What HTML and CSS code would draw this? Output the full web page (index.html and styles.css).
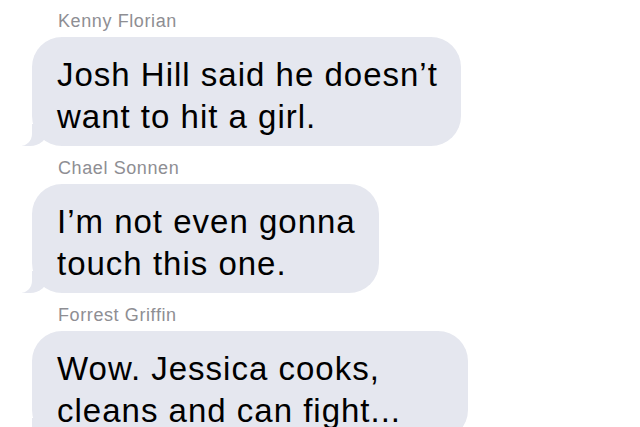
FILE: index.html
```html
<!DOCTYPE html>
<html lang="en">
<head>
  <meta charset="UTF-8" />
  <meta name="viewport" content="width=device-width, initial-scale=1" />
  <title>Group chat</title>
  <link rel="stylesheet" href="styles.css">
</head>
<body>
  <main class="thread">
    <div class="message">
      <div class="sender">Kenny Florian</div>
      <div class="bubble">Josh Hill said he doesn’t<br />want to hit a girl.</div>
    </div>

    <div class="message">
      <div class="sender">Chael Sonnen</div>
      <div class="bubble">I’m not even gonna<br />touch this one.</div>
    </div>

    <div class="message">
      <div class="sender">Forrest Griffin</div>
      <div class="bubble bubble-long">Wow. Jessica cooks,<br />cleans and can fight...</div>
    </div>
  </main>
</body>
</html>
```

FILE: styles.css
```css
body {
  margin: 0;
  background: #ffffff;
  font-family: "Liberation Sans", Arial, sans-serif;
  color: #000;
  overflow: hidden;
}

.thread {
  display: flex;
  flex-direction: column;
  gap: 12px;
  padding-top: 11px;
}

.message {
  display: flex;
  flex-direction: column;
  align-items: flex-start;
  gap: 6px;
}

.sender {
  margin-left: 58px;
  font-size: 18px;
  line-height: 20px;
  letter-spacing: 0.6px;
  color: #8e8e93;
}

.bubble {
  position: relative;
  margin-left: 32px;
  padding: 17px 23px 8px 25px;
  font-size: 33px;
  line-height: 42px;
  letter-spacing: 1px;
  background: #e5e7ef;
  border-radius: 30px;
}

.bubble-long {
  min-width: 388px;
}

/* tail at bottom left */
.bubble::before {
  content: "";
  position: absolute;
  bottom: 0;
  left: -10px;
  width: 26px;
  height: 22px;
  background: #e5e7ef;
  border-bottom-right-radius: 18px 16px;
  z-index: -1;
}
.bubble::after {
  content: "";
  position: absolute;
  bottom: 0;
  left: -16px;
  width: 16px;
  height: 22px;
  background: #ffffff;
  border-bottom-right-radius: 12px;
}
```
